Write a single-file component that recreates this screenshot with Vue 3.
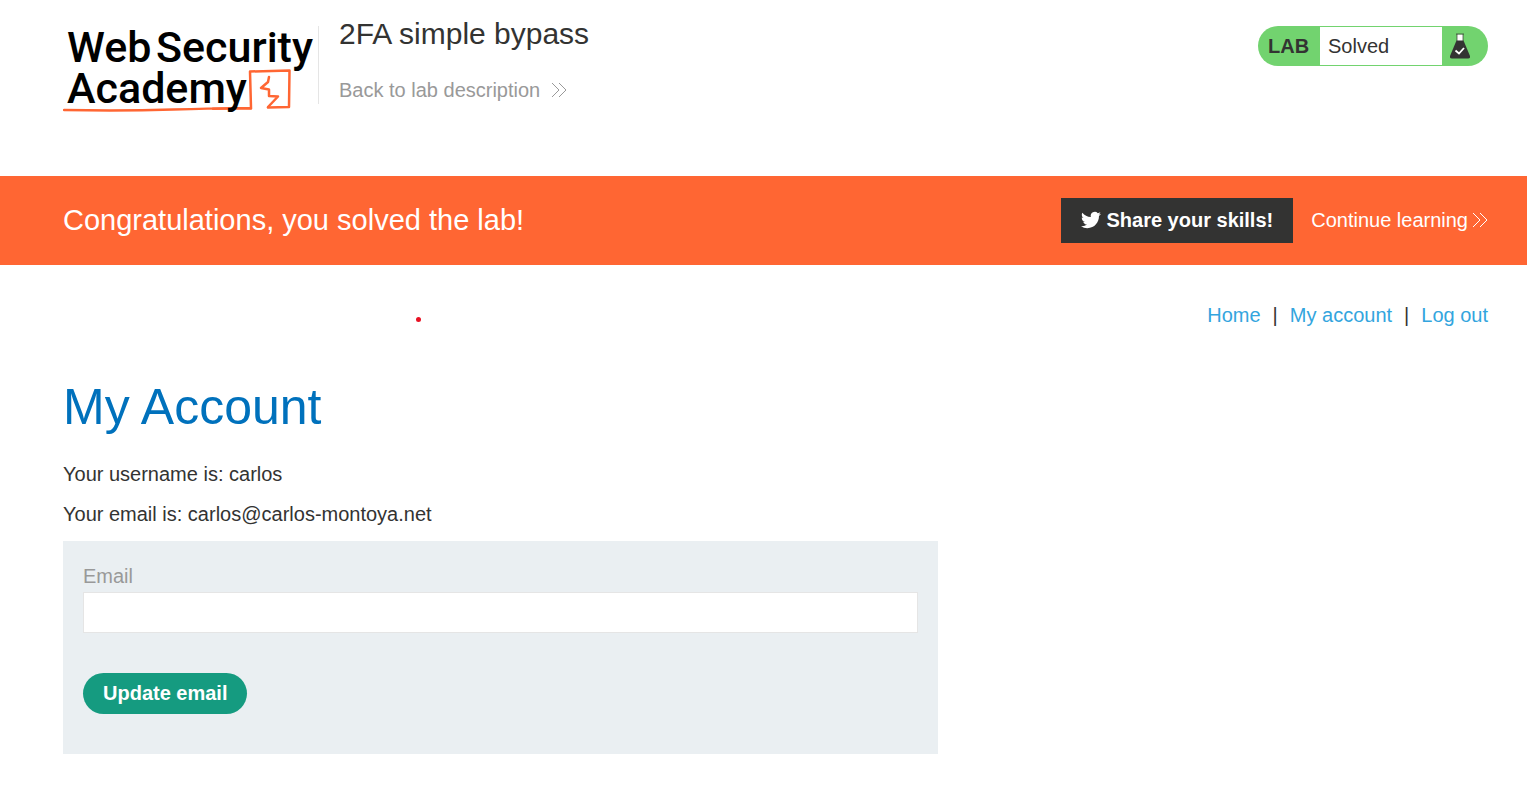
<script setup>
import { ref } from 'vue'

const email = ref('')
const links = ['Home', 'My account', 'Log out']
const details = ['Your username is: carlos', 'Your email is: carlos@carlos-montoya.net']
</script>

<template>
  <div class="page">
    <header class="header">
      <a class="logo" href="#" aria-label="Web Security Academy">
        <svg width="255" height="96" viewBox="0 0 255 96">
          <g fill="none" stroke="#ff6633" stroke-linejoin="round" stroke-linecap="round">
            <path d="M1 90 Q60 91 110 89.500 T188 88.500" stroke-width="2.500" />
            <path d="M150 88.700 L188 88 L187 51.500 L226.500 50.500 L226 87 L205 87.500" stroke-width="2.500" />
            <path d="M206 57 L205 62 L198 68 L206 69.500 L206 76 L215 76.500 L205 87" stroke-width="2.500" />
          </g>
          <g class="wordmark">
            <text x="4" y="42">Web</text>
            <text x="93" y="42">Security</text>
            <text x="4" y="83">Academy</text>
          </g>
        </svg>
      </a>
      <div class="title">
        <h2>2FA simple bypass</h2>
        <a class="back" href="#">
          Back to lab description
          <svg class="arrows" width="16" height="16" viewBox="0 0 16 16">
            <path d="M1 1 L8 8 L1 15 M8 1 L15 8 L8 15" fill="none" stroke="currentColor" />
          </svg>
        </a>
      </div>
      <div class="status">
        <span class="lab">LAB</span>
        <p>Solved</p>
        <svg width="20" height="26" viewBox="0 0 20 26">
          <path d="M7 1.500 H13 V9 H7 Z" fill="#fff" />
          <path d="M6 1 H14 M7 1 V8 M13 1 V8" fill="none" stroke="#333332" stroke-opacity=".7" />
          <path d="M6.500 7.500 H13.500 L20 23 Q20.500 25.500 18 25.500 H2 Q-.5 25.500 0 23 Z" fill="#333332" />
          <path d="M5.500 17.500 L9 20.500 L14 15" fill="none" stroke="#fff" stroke-width="1.800" />
        </svg>
      </div>
    </header>

    <section class="banner">
      <h4>Congratulations, you solved the lab!</h4>
      <button class="share" type="button">
        <svg width="20" height="20" viewBox="0 0 24 24">
          <path
            fill="#fff"
            d="M23.950 4.570a10 10 0 0 1-2.820.775 4.958 4.958 0 0 0 2.163-2.723c-.951.555-2.005.959-3.127 1.184a4.920 4.920 0 0 0-8.384 4.482C7.690 8.095 4.067 6.130 1.640 3.162a4.822 4.822 0 0 0-.666 2.475c0 1.710.870 3.213 2.188 4.096a4.904 4.904 0 0 1-2.228-.616v.060a4.923 4.923 0 0 0 3.946 4.827 4.996 4.996 0 0 1-2.212.085 4.936 4.936 0 0 0 4.604 3.417 9.867 9.867 0 0 1-6.102 2.105c-.390 0-.779-.023-1.170-.067a13.995 13.995 0 0 0 7.557 2.209c9.053 0 13.998-7.496 13.998-13.985 0-.210 0-.420-.015-.630A9.935 9.935 0 0 0 24 4.590z"
          />
        </svg>
        Share your skills!
      </button>
      <a class="continue" href="#">
        Continue learning
        <svg class="arrows" width="16" height="16" viewBox="0 0 16 16">
          <path d="M1 1 L8 8 L1 15 M8 1 L15 8 L8 15" fill="none" stroke="currentColor" />
        </svg>
      </a>
    </section>

    <main class="content">
      <span class="dot"></span>
      <nav>
        <template v-for="(link, i) in links" :key="link">
          <span v-if="i">|</span>
          <a href="#">{{ link }}</a>
        </template>
      </nav>
      <h1>My Account</h1>
      <p v-for="line in details" :key="line">{{ line }}</p>
      <form @submit.prevent>
        <label for="email">Email</label>
        <input id="email" v-model="email" type="email" />
        <button type="submit">Update email</button>
      </form>
    </main>
  </div>
</template>

<style>
body {
  margin: 0;
  background: #fff;
}
</style>

<style scoped>
.page {
  font-family: "Liberation Sans", Arial, sans-serif;
  font-size: 20px;
  line-height: 24px;
  color: #333332;
}

.page * {
  box-sizing: border-box;
}

h1, h2, h4, p {
  margin: 0;
  font-weight: 400;
}

a {
  text-decoration: none;
}

button {
  font: inherit;
  font-weight: 700;
  color: #fff;
  border: 0;
  cursor: pointer;
}

.header {
  display: flex;
  align-items: flex-start;
  min-height: 176px;
  padding: 20px 39px 0 63px;
}

.logo svg {
  display: block;
}

.wordmark {
  font-family: Roboto, "Liberation Sans", sans-serif;
  font-size: 43px;
  font-weight: 500;
  fill: #000;
}

.title {
  flex: 1;
  height: 78px;
  margin-top: 6px;
  padding-left: 20px;
  border-left: 1px solid #e5e5e5;
}

.title h2 {
  margin-top: -10px;
  font-size: 30px;
  line-height: 36px;
}

.back {
  display: flex;
  align-items: center;
  gap: 11px;
  margin-top: 26px;
  color: #999;
}

.status {
  display: flex;
  align-items: center;
  width: 230px;
  height: 40px;
  margin-top: 6px;
  padding-right: 18px;
  border-radius: 20px;
  background: #72d36f;
}

.lab {
  width: 62px;
  padding-left: 10px;
  font-weight: 700;
}

.status p {
  flex: 1;
  height: 38px;
  margin-right: 8px;
  padding-left: 8px;
  line-height: 38px;
  background: #fff;
}

.banner {
  display: flex;
  align-items: center;
  min-height: 89px;
  padding: 0 39px 0 63px;
  color: #fff;
  background: #ff6633;
}

.banner h4 {
  flex: 1;
  padding-bottom: 2px;
  font-size: 29px;
  line-height: 36px;
}

.share {
  display: flex;
  align-items: center;
  gap: 5px;
  height: 45px;
  padding: 0 20px 2px;
  background: #333332;
}

.continue {
  display: flex;
  align-items: center;
  gap: 4px;
  margin-left: 18px;
  padding-bottom: 2px;
  color: #fff;
}

.content {
  position: relative;
  padding: 38px 39px 32px 63px;
}

.dot {
  position: absolute;
  top: 52px;
  left: 416px;
  width: 5px;
  height: 5px;
  border-radius: 50%;
  background: #e81123;
}

nav {
  display: flex;
  justify-content: flex-end;
  gap: 12px;
}

nav a {
  color: #33a5de;
}

h1 {
  margin: 50px 0 24px;
  font-size: 50px;
  line-height: 60px;
  color: #0071bc;
}

.content p {
  margin-bottom: 14px;
  line-height: 26px;
}

form {
  display: flex;
  flex-direction: column;
  align-items: flex-start;
  max-width: 875px;
  padding: 23px 20px 40px;
  background: #eaeff2;
}

label {
  margin-bottom: 4px;
  color: #999;
}

input {
  width: 100%;
  height: 41px;
  padding: 0 10px;
  font: inherit;
  border: 1px solid #e5e5e5;
  background: #fff;
}

form button {
  height: 41px;
  margin-top: 40px;
  padding: 0 20px 2px;
  border-radius: 21px;
  background: #159b80;
}
</style>
